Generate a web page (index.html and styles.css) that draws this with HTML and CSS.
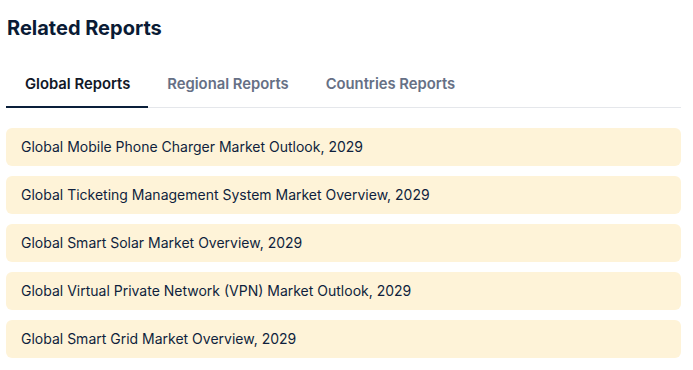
FILE: index.html
```html
<!DOCTYPE html>
<html lang="en">
<head>
  <meta charset="UTF-8">
  <title>Related Reports</title>
  <meta name="viewport" content="width=device-width, initial-scale=1.0">
  <link rel="stylesheet" href="styles.css">
</head>
<body>

<section class="related">
  <h2 class="related-title">Related Reports</h2>

  <nav class="tabs">
    <a class="tab active" href="#">Global Reports</a>
    <a class="tab" href="#">Regional Reports</a>
    <a class="tab" href="#">Countries Reports</a>
  </nav>

  <ul class="report-list">
    <li><a href="#">Global Mobile Phone Charger Market Outlook, 2029</a></li>
    <li><a href="#">Global Ticketing Management System Market Overview, 2029</a></li>
    <li><a href="#">Global Smart Solar Market Overview, 2029</a></li>
    <li><a href="#">Global Virtual Private Network (VPN) Market Outlook, 2029</a></li>
    <li><a href="#">Global Smart Grid Market Overview, 2029</a></li>
  </ul>
</section>

</body>
</html>
```

FILE: styles.css
```css
body {
  font-family: "Inter", "Liberation Sans", sans-serif;
  background: #ffffff;
  color: #0b1a33;
  margin: 0;
  padding: 0;
}
.related {
  width: 675px;
  padding: 14px 0 0 6px;
}
.related-title {
  margin: 0 0 0 1px;
  font-size: 20px;
  font-weight: 700;
  line-height: 28px;
  color: #0a1b35;
}
.tabs {
  display: flex;
  margin-top: 31px;
  border-bottom: 1px solid #e5e7eb;
}
.tab {
  padding: 0 18px 11px 19px;
  font-size: 14.8px;
  font-weight: 600;
  line-height: 22px;
  color: #667085;
  text-decoration: none;
  border-bottom: 2px solid transparent;
  margin-bottom: -1px;
}
.tab.active {
  color: #111827;
  border-bottom-color: #0a1f3a;
}
.report-list {
  list-style: none;
  margin: 20px 0 0;
  padding: 0;
  display: flex;
  flex-direction: column;
  gap: 10px;
}
.report-list a {
  display: block;
  background: #fef3d8;
  border-radius: 6px;
  padding: 0 15px;
  line-height: 38px;
  font-size: 14px;
  color: #0f1f3d;
  text-decoration: none;
}
```
